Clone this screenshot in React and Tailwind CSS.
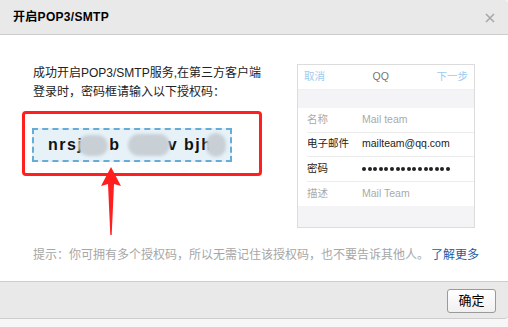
import React from 'react';

const font = { fontFamily: '"Liberation Sans", "Noto Sans CJK SC", sans-serif' };

const Blob = ({ w, className }) => (
  <span className={`inline-block align-middle h-[20px] rounded-full bg-[#c8d0d6] blur-[1.5px] ${className}`} style={{ width: w }} />
);

const Dots = () => (
  <span className="flex gap-[1.6px]">
    {Array.from({ length: 16 }).map((_, i) => (
      <span key={i} className="w-[4px] h-[4px] rounded-full bg-[#222]" />
    ))}
  </span>
);

const PhonePreview = () => (
  <div className="w-[178px] h-[164px] border border-[#dcdcdc] bg-[#f4f4f6] flex flex-col text-[10.5px]">
    {/* top bar */}
    <div className="h-[25px] bg-white flex items-center justify-between px-[6px] border-b border-[#f0f0f0]">
      <span className="text-[#9ccbee]">取消</span>
      <span className="text-[#777]">QQ</span>
      <span className="text-[#9ccbee]">下一步</span>
    </div>
    <div className="h-[18px]" />
    <div className="bg-white pl-[9px]">
      {[
        ['名称', 'Mail team', false],
        ['电子邮件', 'mailteam@qq.com', true],
        ['密码', null, true],
        ['描述', 'Mail Team', false],
      ].map(([label, value, strong], i) => (
        <div
          key={label}
          className={`h-[24.5px] flex items-center ${i < 3 ? 'border-b border-[#ececec]' : ''}`}
        >
          <span className={`w-[55px] ${strong ? 'text-[#222]' : 'text-[#aaa]'}`}>{label}</span>
          {value ? (
            <span className={strong ? 'text-[#222]' : 'text-[#aaa]'}>{value}</span>
          ) : (
            <Dots />
          )}
        </div>
      ))}
    </div>
  </div>
);

export default function App() {
  return (
    <div className="w-[508px] h-[327px] bg-[#f6f6f6] overflow-hidden" style={font}>
      {/* header */}
      <div className="h-[35px] bg-[#e9e9e9] border-b border-[#cdcdcd] flex items-center justify-between pl-[13px] pr-[13px] rounded-tr-[4px]">
        <span className="text-[12px] font-bold text-black tracking-[0.3px]">开启POP3/SMTP</span>
        <svg width="10" height="10" viewBox="0 0 10 10" className="mt-[1px]">
          <path d="M1 1 L9 9 M9 1 L1 9" stroke="#a8a8a8" strokeWidth="1.6" />
        </svg>
      </div>

      {/* body */}
      <div className="h-[246px] bg-white pt-[29px] pl-[22px]">
        <div className="flex">
          <div className="relative w-[240px]">
            <div className="pl-[11px] text-[12px] leading-[19px] text-[#222]">
              <div>成功开启POP3/SMTP服务,在第三方客户端</div>
              <div>登录时，密码框请输入以下授权码：</div>
            </div>
            <div className="mt-[9px] h-[65px] border-[3px] border-[#ff1f1f] rounded-[4px] pt-[14px] pl-[7px]">
              <div className="w-[200px] h-[34px] border-2 border-dashed border-[#66acd6] bg-[#e6f1f8] flex items-center pl-[14px] text-[16px] font-bold text-[#111] tracking-[1.5px]">
                <span>nrsj</span>
                <Blob w="30px" className="-ml-[5px] h-[21px]" />
                <span className="ml-[1px]">b</span>
                <Blob w="42px" className="ml-[7px] h-[22px]" />
                <span className="-ml-[2px]">v bjh</span>
                <Blob w="20px" className="-ml-[6px] h-[24px]" />
              </div>
            </div>
            <svg
              className="absolute left-[78px] top-[103px]"
              width="22"
              height="68"
              viewBox="0 0 22 68"
            >
              <path d="M11 0 L21 19 L14 17 L11.7 68 L10.3 68 L8 17 L1 19 Z" fill="#ff1f1f" />
            </svg>
          </div>
          <div className="ml-[35px]">
            <PhonePreview />
          </div>
        </div>
        <div className="mt-[18px] pl-[11px] text-[12px] leading-[19px] text-[#a6a6a6]">
          提示：你可拥有多个授权码，所以无需记住该授权码，也不要告诉其他人。
          <span className="text-[#1d5aa6] ml-[2px]">了解更多</span>
        </div>
      </div>

      {/* footer */}
      <div className="h-[38px] bg-[#e9e9e9] border-t border-b border-[#cdcdcd] flex justify-end pr-[12px] pt-[7px] rounded-br-[4px]">
        <button className="w-[49px] h-[24px] border border-[#9a9a9a] rounded-[3px] bg-gradient-to-b from-white to-[#f0f0f0] text-[13px] text-black">
          确定
        </button>
      </div>
    </div>
  );
}
